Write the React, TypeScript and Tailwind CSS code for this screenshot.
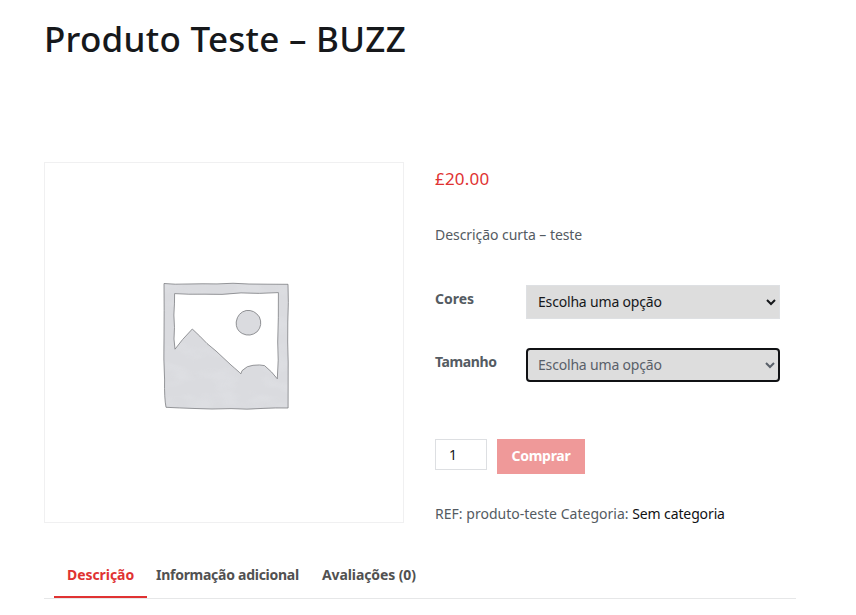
import type { ReactNode } from "react";

function PlaceholderImage() {
  return (
    <svg width="128" height="130" viewBox="0 0 128 130" className="block" aria-hidden="true">
      <defs>
        <filter id="wash" x="0" y="0" width="100%" height="100%">
          <feTurbulence type="fractalNoise" baseFrequency="0.04 0.08" numOctaves="2" seed="4" />
          <feColorMatrix values="0 0 0 0 0.74  0 0 0 0 0.75  0 0 0 0 0.78  3 0 0 0 -1.3" />
          <feComposite in2="SourceGraphic" operator="in" />
        </filter>
        <path
          id="frame"
          fillRule="evenodd"
          d="M1 1.5 Q12 2.6 24 2 Q39 1.6 54 1.9 Q70 0.6 86 2 L104 2.2 L125 2.3 Q125.8 20 124.8 40 Q124.4 60 125.2 80 L125.1 126 Q112 125.7 100 126.4 Q84 127.8 68 126.6 Q48 127.5 32 126.5 Q16 126 3 125.3 Q1.2 116 1.6 98 Q0.4 77 1 56 Q1.3 28 1 1.5Z M11.6 11.6 Q11.7 20 10.9 33 Q12 46 11 57 L12 67.2 Q18.5 58 29.3 47 Q37 54 44 61.5 L53 69 L68 83 Q75 89 77.9 91.8 L79 88.7 Q84 83.5 90 83.3 Q97 82.4 101.5 83.6 Q109 89.6 114.3 96.8 Q115.9 78 114.7 60 Q115.6 36 115.4 10.6 Q96 12 78 10.9 Q58 13.2 42 12.2 Q25 12.6 11.6 11.6Z"
        />
      </defs>
      <use href="#frame" fill="#dadbdf" />
      <use href="#frame" fill="#dadbdf" filter="url(#wash)" opacity="0.6" />
      <use href="#frame" fill="none" stroke="#77787c" strokeWidth="0.75" />
      <path d="M73.2 40Q74.7 30.5 83.2 28.5Q91.4 27.5 96.4 35Q99.9 43 94.4 49.5Q87.2 55.5 79.2 51.5Q72.7 48 73.2 40Z" fill="#dadbdf" stroke="#77787c" strokeWidth="0.8" />
    </svg>
  );
}

function Tab({ className, children }: { className: string; children: ReactNode }) {
  return <a className={`block h-[34px] shrink-0 pt-px whitespace-nowrap text-[14px] leading-5 font-bold ${className}`}>{children}</a>;
}

export default function App() {
  return (
    <main className="h-[615px] w-[856px] overflow-hidden bg-white pl-11 font-['Noto_Sans',sans-serif] text-[14px] text-[#545b62]">
      <h1 className="pt-[15px] text-[35px] leading-[48px] font-medium tracking-[0.26px] whitespace-nowrap text-[#16181b]">
        <span>Produto Teste – BUZZ</span>
      </h1>

      <section className="mt-[99px] flex h-[361px]">
        <div className="h-[361px] w-[360px] shrink-0 border border-[#f0f0f1] pt-[119px] pl-[118px]">
          <PlaceholderImage />
        </div>

        <div className="ml-[31px] w-[345px]">
          <p className="pt-[5px] text-[17px] leading-6 tracking-[0.2px] text-[#e03232]"><span>£20.00</span></p>
          <p className="mt-[34px] leading-5 tracking-[-0.06px]"><span>Descrição curta – teste</span></p>

          <div className="mt-[40px] flex h-[34px]">
            <label htmlFor="cores" className="w-[91px] pt-[4px] leading-5 font-bold"><span>Cores</span></label>
            <select id="cores" className="h-[34px] w-[254px] rounded-none border border-[#dee0e3] bg-[#ddd] pb-[2px] pl-[7px] text-[14px] tracking-[-0.18px] text-[#16181b]">
              <option>Escolha uma opção</option>
            </select>
          </div>
          <div className="mt-[29px] flex h-[34px]">
            <label htmlFor="tamanho" className="w-[91px] pt-[4px] leading-5 font-bold tracking-[-0.4px]"><span>Tamanho</span></label>
            <select id="tamanho" className="h-[34px] w-[254px] rounded-[4px] border-2 border-[#101114] bg-[#ddd] pb-[2px] pl-[6px] text-[14px] tracking-[-0.18px] text-[#596069]">
              <option>Escolha uma opção</option>
            </select>
          </div>

          <div className="mt-[57px] flex items-start">
            <input aria-label="Quantidade" defaultValue="1" className="h-[31px] w-[52px] border border-[#dddfe2] pl-[13px] text-[14px] text-[#16181b]" />
            <button className="ml-[10px] h-[35px] w-[88px] bg-[#ef9999] pb-[2px] text-[14px] font-bold tracking-[-0.3px] text-white">Comprar</button>
          </div>

          <p className="mt-[30px] leading-5 whitespace-nowrap">
            <span className="tracking-[0.02px]">REF: produto-teste Categoria: </span><a className="tracking-[-0.12px] text-[#101114]">Sem categoria</a>
          </p>
        </div>
      </section>

      <nav className="mt-[41px] flex h-[35px] w-[752px] border-b border-[#e6e7e8] pl-[10px]">
        <Tab className="w-[93px] border-b-2 border-[#e03232] pl-[13px] tracking-[-0.06px] text-[#e03232]">Descrição</Tab>
        <Tab className="ml-[9px] w-[166px] tracking-[-0.27px] text-[#515151]">Informação adicional</Tab>
        <Tab className="tracking-[-0.1px] text-[#515151]">Avaliações (0)</Tab>
      </nav>
    </main>
  );
}
